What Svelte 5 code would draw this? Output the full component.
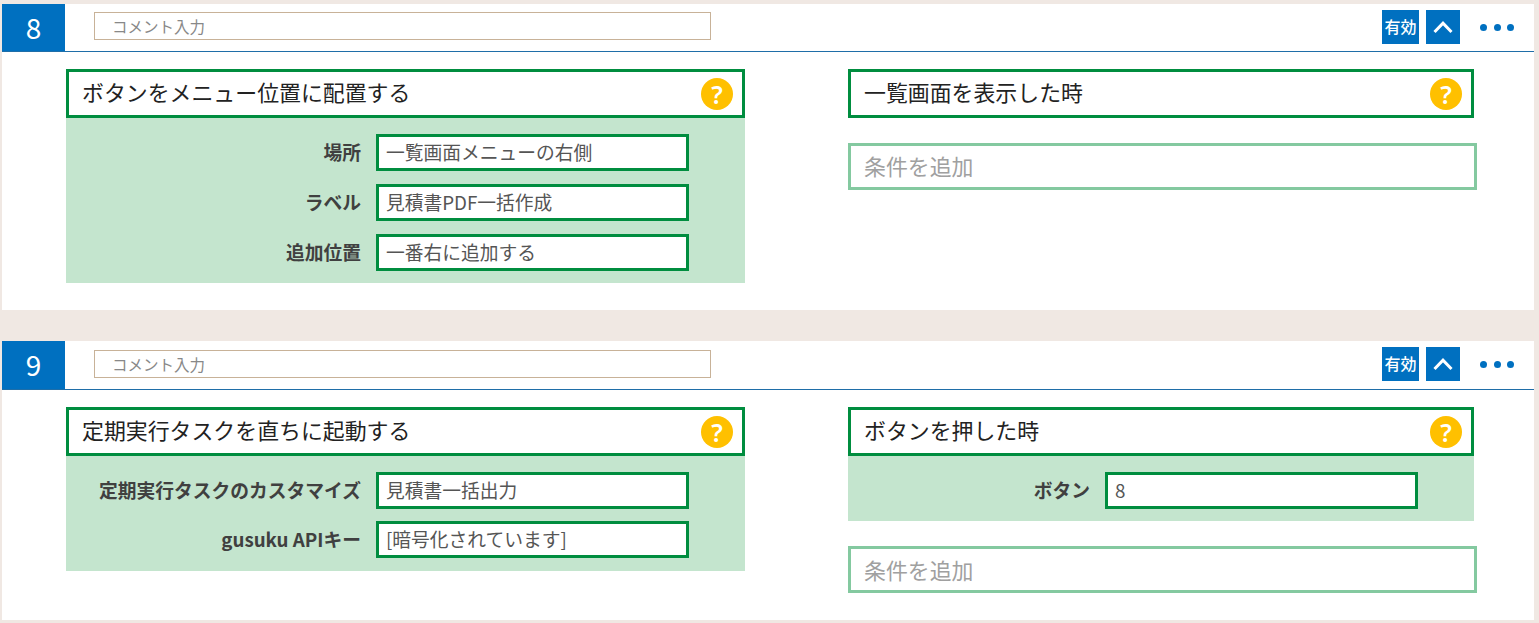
<script>
  const cards = [
    {
      no: 8,
      action: {
        title: 'ボタンをメニュー位置に配置する',
        rows: [
          { label: '場所', value: '一覧画面メニューの右側' },
          { label: 'ラベル', value: '見積書PDF一括作成' },
          { label: '追加位置', value: '一番右に追加する' }
        ]
      },
      trigger: { title: '一覧画面を表示した時', rows: [] }
    },
    {
      no: 9,
      action: {
        title: '定期実行タスクを直ちに起動する',
        rows: [
          { label: '定期実行タスクのカスタマイズ', value: '見積書一括出力' },
          { label: 'gusuku APIキー', value: '[暗号化されています]' }
        ]
      },
      trigger: { title: 'ボタンを押した時', rows: [{ label: 'ボタン', value: '8' }] }
    }
  ]
</script>

{#snippet titleBox(title)}
  <div class="title">
    <span class="name">{title}</span>
    <span class="help">?</span>
  </div>
{/snippet}

<main class="page">
  {#each cards as card}
    <section class="card">
      <header class="head">
        <div class="no">{card.no}</div>
        <div class="comment">コメント入力</div>
        <div class="tools">
          <button class="btn enable">有効</button>
          <button class="btn fold" aria-label="折りたたむ">
            <svg viewBox="0 0 20 14" width="20" height="14">
              <path d="M1.5 12L10 3.2 18.5 12" fill="none" stroke="#fff" stroke-width="3" />
            </svg>
          </button>
          <button class="more" aria-label="メニュー"><i></i><i></i><i></i></button>
        </div>
      </header>
      <div class="body">
        <div class="action">
          {@render titleBox(card.action.title)}
          <div class="rows">
            {#each card.action.rows as row}
              <div class="row">
                <div class="label">{row.label}</div>
                <div class="value">{row.value}</div>
              </div>
            {/each}
          </div>
        </div>
        <div class="trigger">
          {@render titleBox(card.trigger.title)}
          {#if card.trigger.rows.length}
            <div class="rows">
              {#each card.trigger.rows as row}
                <div class="row">
                  <div class="label">{row.label}</div>
                  <div class="value">{row.value}</div>
                </div>
              {/each}
            </div>
          {/if}
          <div class="add">条件を追加</div>
        </div>
      </div>
    </section>
  {/each}
</main>

<style>
  :global(body) {
    margin: 0;
    background: #f0e8e3;
  }

  .page {
    display: flex;
    flex-direction: column;
    gap: 31px;
    padding: 4px 5px 0 2px;
    font-family: "Noto Sans CJK JP", "Noto Sans", sans-serif;
    color: #333;
  }

  .card {
    background: #fff;
  }

  .card:first-child {
    height: 306px;
  }

  .card:last-child {
    height: 279px;
  }

  .head {
    display: flex;
    align-items: flex-start;
    height: 47px;
    border-bottom: 1px solid #1f6ea8;
  }

  .card:last-child .head {
    height: 48px;
  }

  .no {
    width: 63px;
    height: 100%;
    box-sizing: border-box;
    padding-bottom: 2px;
    display: flex;
    align-items: center;
    justify-content: center;
    background: #0070c0;
    color: #fff;
    font-size: 28px;
  }

  .comment {
    width: 617px;
    height: 28px;
    box-sizing: border-box;
    margin: 8px 0 0 29px;
    padding-left: 17px;
    border: 1px solid #c8b298;
    font-size: 15.5px;
    line-height: 26px;
    color: #888;
  }

  .card:last-child .comment {
    margin-top: 9px;
  }

  .tools {
    display: flex;
    align-items: center;
    margin: 6px 20px 0 auto;
  }

  .btn {
    height: 34px;
    padding: 0;
    border: 0;
    display: flex;
    align-items: center;
    justify-content: center;
    background: #0070c0;
    color: #fff;
    font: 500 16px "Noto Sans CJK JP", sans-serif;
  }

  .enable {
    width: 37px;
    padding-bottom: 2px;
  }

  .fold {
    width: 34px;
    margin-left: 7px;
  }

  .more {
    width: 34px;
    height: 34px;
    margin-left: 20px;
    padding: 0;
    border: 0;
    background: none;
    display: flex;
    align-items: center;
    justify-content: space-between;
  }

  .more i {
    width: 7px;
    height: 7px;
    border-radius: 50%;
    background: #0070c0;
  }

  .body {
    display: flex;
    padding: 17px 0 0 64px;
  }

  .action {
    width: 679px;
  }

  .trigger {
    width: 629px;
    margin-left: 103px;
  }

  .title {
    height: 49px;
    box-sizing: border-box;
    display: flex;
    align-items: center;
    justify-content: space-between;
    padding: 0 9px 0 13px;
    border: 3px solid #008d3f;
    background: #fff;
    color: #222;
    font-size: 21.9px;
  }

  .name {
    margin-top: -5px;
  }

  .trigger .title {
    width: 626px;
  }

  .help {
    width: 32px;
    height: 32px;
    border-radius: 50%;
    background: #ffc000;
    color: #fff;
    font: 600 25px/32px "Noto Sans", sans-serif;
    text-align: center;
  }

  .rows {
    display: flex;
    flex-direction: column;
    gap: 13px;
    padding: 16px 0 12px;
    background: #c4e5ce;
  }

  .card:last-child .action .rows {
    gap: 12px;
    padding-bottom: 13px;
  }

  .trigger .rows {
    width: 626px;
    box-sizing: border-box;
  }

  .row {
    display: flex;
    align-items: center;
  }

  .label {
    width: 295px;
    margin-top: -2px;
    text-align: right;
    font-size: 18.75px;
    font-weight: 700;
    color: #404040;
  }

  .value {
    width: 313px;
    height: 37px;
    box-sizing: border-box;
    margin-left: 15px;
    padding-left: 7px;
    border: 3px solid #008d3f;
    background: #fff;
    font-size: 18.75px;
    line-height: 29px;
    color: #555;
  }

  .trigger .label {
    width: 242px;
  }

  .add {
    height: 47px;
    box-sizing: border-box;
    margin-top: 25px;
    padding-left: 13px;
    border: 3px solid #84c9a0;
    font-size: 21.9px;
    line-height: 40px;
    color: #a0a0a0;
  }

  .card:last-child .add {
    line-height: 41px;
  }
</style>
